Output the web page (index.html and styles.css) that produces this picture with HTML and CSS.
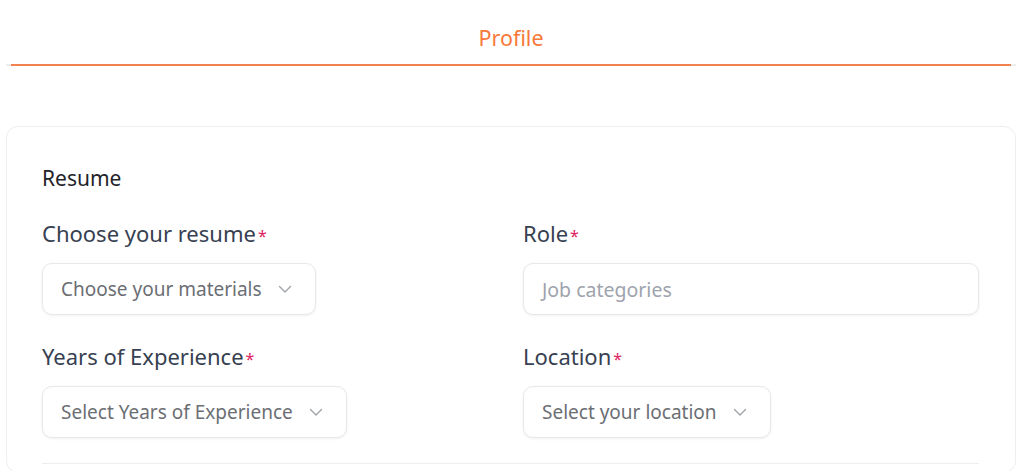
FILE: index.html
```html
<!DOCTYPE html>
<html lang="en">
<head>
<meta charset="utf-8">
<title>Profile</title>
<link rel="stylesheet" href="styles.css">
</head>
<body>
<div class="page">
  <nav class="tabs">
    <div class="tab active">Profile</div>
  </nav>
  <section class="card">
    <h2 class="section-title">Resume</h2>
    <div class="grid">
      <div class="field">
        <label class="label">Choose your resume<span class="req">*</span></label>
        <div class="select">
          <span class="select-text">Choose your materials</span>
          <svg class="chev" viewBox="0 0 16 16" width="16" height="16"><path d="M2.5 5.5 8 11 13.5 5.5" fill="none" stroke="currentColor" stroke-width="1.4" stroke-linecap="round" stroke-linejoin="round"/></svg>
        </div>
      </div>
      <div class="field">
        <label class="label">Role<span class="req">*</span></label>
        <div class="input"><span class="placeholder">Job categories</span></div>
      </div>
      <div class="field">
        <label class="label">Years of Experience<span class="req">*</span></label>
        <div class="select">
          <span class="select-text">Select Years of Experience</span>
          <svg class="chev" viewBox="0 0 16 16" width="16" height="16"><path d="M2.5 5.5 8 11 13.5 5.5" fill="none" stroke="currentColor" stroke-width="1.4" stroke-linecap="round" stroke-linejoin="round"/></svg>
        </div>
      </div>
      <div class="field">
        <label class="label">Location<span class="req">*</span></label>
        <div class="select">
          <span class="select-text">Select your location</span>
          <svg class="chev" viewBox="0 0 16 16" width="16" height="16"><path d="M2.5 5.5 8 11 13.5 5.5" fill="none" stroke="currentColor" stroke-width="1.4" stroke-linecap="round" stroke-linejoin="round"/></svg>
        </div>
      </div>
    </div>
    <hr class="divider">
  </section>
</div>
</body>
</html>
```

FILE: styles.css
```css
* { box-sizing: border-box; }
html, body {
  margin: 0;
  padding: 0;
  background: #ffffff;
  font-family: "Noto Sans", "Open Sans", sans-serif;
  color: #374151;
}
.page {
  padding: 0 8px 0 6px;
}
.tabs {
  display: flex;
  justify-content: center;
  border-bottom: 2px solid #eeeeee;
  height: 66px;
}
.tab {
  flex: 1;
  margin: 0 5px -2px 5px;
  text-align: center;
  font-size: 21.5px;
  line-height: 28px;
  padding-top: 24px;
  color: #f7793a;
  border-bottom: 2px solid #f2834f;
}
.card {
  margin-top: 60px;
  border: 1px solid #eeeeee;
  border-radius: 12px;
  padding: 37px 36px 8px 35px;
}
.section-title {
  margin: 0;
  font-size: 21px;
  font-weight: 400;
  line-height: 28px;
  color: #1f2329;
}
.grid {
  display: grid;
  grid-template-columns: 1fr 1fr;
  column-gap: 25px;
  row-gap: 27px;
  margin-top: 27px;
}
.field {
  display: flex;
  flex-direction: column;
  align-items: flex-start;
  gap: 13px;
}
.label {
  font-size: 22px;
  line-height: 28px;
  color: #374151;
}
.req {
  color: #e0245e;
  font-size: 16px;
  margin-left: 2px;
}
.select, .input {
  height: 52px;
  display: inline-flex;
  align-items: center;
  border: 1px solid #e6e8eb;
  border-radius: 10px;
  background: #fff;
  box-shadow: 0 1px 3px rgba(0, 0, 0, 0.06);
  font-size: 19px;
}
.select {
  padding: 0 22px 0 18px;
  gap: 15px;
  color: #6b6e73;
}
.chev {
  color: #a0a3a8;
}
.input {
  width: 100%;
  padding: 0 18px;
  font-size: 19.5px;
}
.placeholder {
  color: #9ea3ad;
}
.divider {
  margin: 25px 0 0 0;
  border: 0;
  border-top: 1px solid #eeeeee;
}
```
